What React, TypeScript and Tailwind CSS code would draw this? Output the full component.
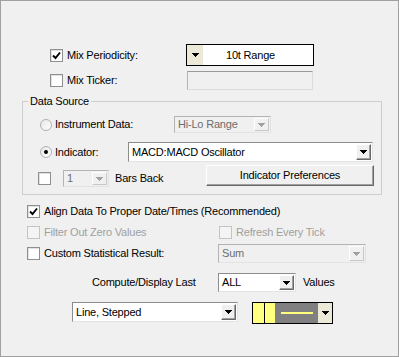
import React from 'react';

function Arrow({ disabled = false }: { disabled?: boolean }) {
  return (
    <svg width="7" height="4" viewBox="0 0 7 4" shapeRendering="crispEdges">
      <polygon points="0,0 7,0 3.5,4" fill={disabled ? '#a0a0a0' : '#000'} />
    </svg>
  );
}

function Check({ checked = false, disabled = false }: { checked?: boolean; disabled?: boolean }) {
  return (
    <div
      className={`w-[13px] h-[13px] flex-shrink-0 border flex items-center justify-center ${
        disabled ? 'border-[#c4c4c4] bg-[#f4f4f4]' : 'border-[#8f8f8f] bg-white shadow-[inset_1px_1px_0_#e2e2e2]'
      }`}
    >
      {checked && (
        <svg width="11" height="11" viewBox="0 0 11 11">
          <path d="M2 5.5 L4.5 8 L9 2.5" stroke="#000" strokeWidth="1.9" fill="none" />
        </svg>
      )}
    </div>
  );
}

function Radio({ checked = false }: { checked?: boolean }) {
  return (
    <div className="w-[12px] h-[12px] flex-shrink-0 rounded-full border border-[#b0b0b0] bg-gradient-to-br from-[#e6e6e6] to-white flex items-center justify-center">
      {checked && <div className="w-[4px] h-[4px] rounded-full bg-black" />}
    </div>
  );
}

function Combo({
  text,
  className,
  disabled = false,
}: {
  text: string;
  className: string;
  disabled?: boolean;
}) {
  return (
    <div
      className={`${className} flex-shrink-0 flex items-stretch border border-t-[#8c8c8c] border-l-[#8c8c8c] border-r-[#e3e3e3] border-b-[#e3e3e3] p-px ${
        disabled ? 'bg-[#f0f0f0] text-[#6d6d6d] border-t-[#b4b4b4] border-l-[#b4b4b4]' : 'bg-white'
      }`}
    >
      <span className="flex-1 flex items-center pl-[2px] whitespace-nowrap overflow-hidden">{text}</span>
      <div
        className={`w-[15px] flex items-center justify-center bg-[#f0f0f0] border border-t-white border-l-white ${
          disabled ? 'border-r-[#c8c8c8] border-b-[#c8c8c8]' : 'border-r-[#696969] border-b-[#696969] shadow-[inset_-1px_-1px_0_#a0a0a0]'
        }`}
      >
        <Arrow disabled={disabled} />
      </div>
    </div>
  );
}

export default function App() {
  return (
    <div className="w-[399px] h-[357px] border border-[#a0a0a0] bg-[#f0f0f0] font-['Liberation_Sans',Arial,sans-serif] text-[11px] tracking-[-0.2px] text-black flex flex-col overflow-hidden">
      {/* Mix Periodicity */}
      <div className="flex items-center h-[22px] mt-[43px] pl-[49px]">
        <Check checked />
        <span className="ml-[4px] w-[119px]">Mix Periodicity:</span>
        <div className="flex w-[128px] h-[22px] border border-black bg-white">
          <div className="w-[16px] bg-[#ece9d8] flex items-center justify-center">
            <Arrow />
          </div>
          <div className="flex-1 flex items-center pl-[23px]">10t Range</div>
        </div>
      </div>

      {/* Mix Ticker */}
      <div className="flex items-center h-[19px] mt-[5px] pl-[49px]">
        <Check />
        <span className="ml-[4px] w-[120px]">Mix Ticker:</span>
        <div className="w-[126px] h-[19px] border border-t-[#9a9a9a] border-l-[#b4b4b4] border-r-[#dcdcdc] border-b-[#dcdcdc] bg-[#f0f0f0]" />
      </div>

      {/* Data Source */}
      <fieldset className="mt-[4px] ml-[21px] w-[360px] border border-[#cdcdcd] pb-[7px]">
        <legend className="ml-[5px] px-[2px] leading-[14px]">Data Source</legend>
        <div className="flex items-center h-[17px] mt-[8px] pl-[17px]">
          <Radio />
          <span className="ml-[3px] w-[119px]">Instrument Data:</span>
          <Combo text="Hi-Lo Range" className="w-[97px] h-[17px]" disabled />
        </div>
        <div className="flex items-center h-[20px] mt-[9px] pl-[17px]">
          <Radio checked />
          <span className="ml-[3px] w-[73px]">Indicator:</span>
          <Combo text="MACD:MACD Oscillator" className="w-[245px] h-[20px]" />
        </div>
        <div className="flex items-start h-[22px] mt-[3px] pl-[15px]">
          <div className="mt-[7px]">
            <Check />
          </div>
          <Combo text="1" className="ml-[12px] mt-[5px] w-[46px] h-[17px]" disabled />
          <span className="ml-[6px] mt-[5px] w-[91px] h-[17px] flex items-center">Bars Back</span>
          <button className="w-[168px] h-[21px] bg-[#f0f0f0] border border-t-white border-l-white border-r-[#696969] border-b-[#696969] shadow-[inset_-1px_-1px_0_#a0a0a0] flex items-center justify-center">
            Indicator Preferences
          </button>
        </div>
      </fieldset>

      {/* Options */}
      <div className="flex items-center h-[13px] mt-[10px] pl-[26px]">
        <Check checked />
        <span className="ml-[4px]">Align Data To Proper Date/Times (Recommended)</span>
      </div>
      <div className="flex items-center h-[13px] mt-[8px] pl-[26px] text-[#a0a0a0]">
        <Check disabled />
        <span className="ml-[4px] w-[175px]">Filter Out Zero Values</span>
        <Check disabled />
        <span className="ml-[4px]">Refresh Every Tick</span>
      </div>
      <div className="flex items-center h-[19px] mt-[5px] pl-[26px]">
        <Check />
        <span className="ml-[4px] w-[174px]">Custom Statistical Result:</span>
        <Combo text="Sum" className="w-[148px] h-[19px]" disabled />
      </div>

      {/* Compute */}
      <div className="flex items-center h-[19px] mt-[10px] pl-[91px]">
        <span className="w-[126px]">Compute/Display Last</span>
        <Combo text="ALL" className="w-[78px] h-[19px]" />
        <span className="ml-[7px]">Values</span>
      </div>

      {/* Plot style */}
      <div className="flex items-start h-[22px] mt-[10px] pl-[71px]">
        <Combo text="Line, Stepped" className="w-[166px] h-[20px]" />
        <div className="ml-[14px] w-[81px] h-[22px] border border-black flex">
          <div className="w-[12px] bg-[#ffff80] border-r border-black" />
          <div className="w-[10px] bg-[#ffff80]" />
          <div className="flex-1 bg-[#808080] flex items-center justify-center">
            <div className="w-[32px] h-[2px] bg-[#ffff80]" />
          </div>
          <div className="w-[14px] bg-[#ece9d8] flex items-center justify-center">
            <Arrow />
          </div>
        </div>
      </div>
    </div>
  );
}
